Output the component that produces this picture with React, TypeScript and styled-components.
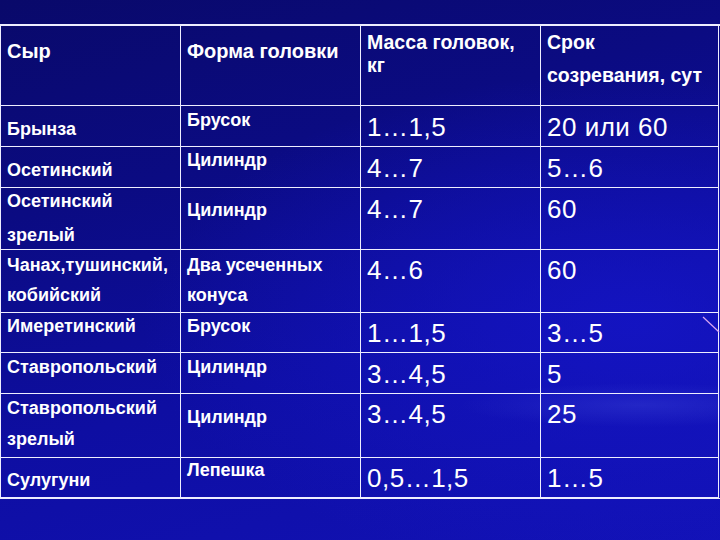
import styled, { createGlobalStyle } from "styled-components"

const GlobalStyle = createGlobalStyle`
  html, body {
    margin: 0;
    padding: 0;
    background: #0c0c88;
  }
`

const Slide = styled.div`
  position: relative;
  width: 720px;
  height: 540px;
  box-sizing: border-box;
  padding-top: 24px;
  overflow: hidden;
  color: #fff;
  font-family: "Liberation Sans", Arial, sans-serif;
  background:
    radial-gradient(ellipse 180px 22px at 640px 405px, rgba(120, 140, 255, 0.16) 0%, transparent 100%),
    radial-gradient(ellipse at 88% 60%, rgba(22, 22, 205, 0.7) 0%, transparent 55%),
    linear-gradient(165deg, #09096a 0%, #0b0b82 30%, #0e0ea2 62%, #1212b6 100%);
`

const Table = styled.div`
  display: grid;
  grid-template-columns: 180px 180px 180px 178px;
  grid-template-rows: 80px 41px 41px 62px 63px 40px 41px 64px 40px;
  width: 719px;
  border-top: 2px solid #eeeeff;
  border-left: 1px solid #eeeeff;
  border-bottom: 1px solid #eeeeff;
`

const Cell = styled.div<{ $pt: number; $gap?: number }>`
  box-sizing: border-box;
  display: flex;
  flex-direction: column;
  gap: ${p => p.$gap ?? 0}px;
  padding: ${p => p.$pt}px 2px 0 6px;
  border-right: 1px solid #eeeeff;
  border-bottom: 1px solid #eeeeff;
  overflow: hidden;
`

type Kind = "title" | "head" | "label" | "value"

const sizes: Record<Kind, [number, number]> = {
  title: [20, 24],
  head: [19.5, 21],
  label: [18, 21],
  value: [26, 30],
}

const Line = styled.span<{ $kind: Kind }>`
  display: block;
  white-space: nowrap;
  font-size: ${p => sizes[p.$kind][0]}px;
  line-height: ${p => sizes[p.$kind][1]}px;
  font-weight: ${p => (p.$kind === "value" ? 400 : 700)};
  letter-spacing: ${p => (p.$kind === "value" ? 0.5 : 0)}px;
`

const Streak = styled.svg`
  position: absolute;
  left: 700px;
  top: 314px;
`

type CellData = { lines: string[]; kind: Kind; pt: number; gap?: number }

const header: CellData[] = [
  { lines: ["Сыр"], kind: "title", pt: 13 },
  { lines: ["Форма головки"], kind: "title", pt: 13 },
  { lines: ["Масса головок,", "кг"], kind: "head", pt: 6, gap: 2 },
  { lines: ["Срок", "созревания, сут"], kind: "head", pt: 6, gap: 12 },
]

type Row = {
  name: string[]
  namePt: number
  nameGap?: number
  shape: string[]
  shapePt: number
  shapeGap?: number
  mass: string
  days: string
  valuePt: number
}

const rows: Row[] = [
  { name: ["Брынза"], namePt: 13, shape: ["Брусок"], shapePt: 4, mass: "1…1,5", days: "20 или 60", valuePt: 6 },
  { name: ["Осетинский"], namePt: 13, shape: ["Цилиндр"], shapePt: 3, mass: "4…7", days: "5…6", valuePt: 6 },
  { name: ["Осетинский", "зрелый"], namePt: 3, nameGap: 13, shape: ["Цилиндр"], shapePt: 12, mass: "4…7", days: "60", valuePt: 6 },
  {
    name: ["Чанах,тушинский,", "кобийский"], namePt: 5, nameGap: 9,
    shape: ["Два усеченных", "конуса"], shapePt: 5, shapeGap: 9,
    mass: "4…6", days: "60", valuePt: 5,
  },
  { name: ["Имеретинский"], namePt: 3, shape: ["Брусок"], shapePt: 3, mass: "1…1,5", days: "3…5", valuePt: 5 },
  { name: ["Ставропольский"], namePt: 4, shape: ["Цилиндр"], shapePt: 4, mass: "3…4,5", days: "5", valuePt: 6 },
  { name: ["Ставропольский", "зрелый"], namePt: 4, nameGap: 10, shape: ["Цилиндр"], shapePt: 13, mass: "3…4,5", days: "25", valuePt: 5 },
  { name: ["Сулугуни"], namePt: 12, shape: ["Лепешка"], shapePt: 2, mass: "0,5…1,5", days: "1…5", valuePt: 5 },
]

function TableCell({ lines, kind, pt, gap }: CellData) {
  return (
    <Cell $pt={pt} $gap={gap}>
      {lines.map(l => (
        <Line key={l} $kind={kind}>{l}</Line>
      ))}
    </Cell>
  )
}

function RowCells({ row }: { row: Row }) {
  return (
    <>
      <TableCell lines={row.name} kind="label" pt={row.namePt} gap={row.nameGap} />
      <TableCell lines={row.shape} kind="label" pt={row.shapePt} gap={row.shapeGap} />
      <TableCell lines={[row.mass]} kind="value" pt={row.valuePt} />
      <TableCell lines={[row.days]} kind="value" pt={row.valuePt} />
    </>
  )
}

export default function App() {
  return (
    <>
      <GlobalStyle />
      <Slide>
        <Table>
          {header.map(h => (
            <TableCell key={h.lines[0]} {...h} />
          ))}
          {rows.map((r, i) => (
            <RowCells key={i} row={r} />
          ))}
        </Table>
        <Streak width="20" height="20" viewBox="0 0 20 20">
          <line x1="3" y1="3" x2="19" y2="18" stroke="#d9a6f2" strokeWidth="1.2" />
        </Streak>
      </Slide>
    </>
  )
}
